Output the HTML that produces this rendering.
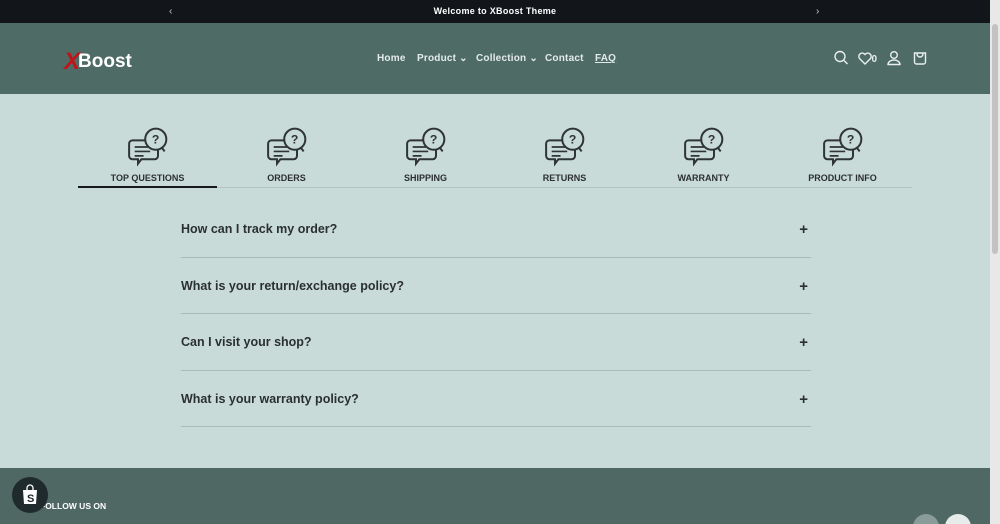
<!DOCTYPE html>
<html><head><meta charset="utf-8"><style>
*{margin:0;padding:0;box-sizing:border-box}
html,body{width:1000px;height:524px;overflow:hidden}
body{background:#c9dbd8;font-family:"Liberation Sans",sans-serif;position:relative}
.top{position:absolute;left:0;top:0;width:990px;height:23px;background:#12161b;color:#fff;font-size:9px;font-weight:bold;text-align:center;line-height:23px;letter-spacing:.3px}
.top .a{position:absolute;top:0;font-size:10px;font-weight:normal;color:#ccc}
.hdr{position:absolute;left:0;top:23px;width:990px;height:71px;background:#4f6b66}
.logo{position:absolute;left:64px;top:23px;color:#fff;font-weight:bold;font-size:19px}
.logo .x{color:#c0141b;font-size:24px;font-style:italic;margin-right:-2px;position:relative;top:2px}
.nav{position:absolute;top:30px;font-size:10px;font-weight:bold;color:#e3ebe9;letter-spacing:.2px}
.sb{position:absolute;right:0;top:0;width:10px;height:524px;background:#e8e8e8}
.sb div{position:absolute;left:2px;top:24px;width:6px;height:230px;background:#c2c2c2;border-radius:3px}
.tab{position:absolute;top:127px;width:139px;text-align:center;font-size:9px;font-weight:bold;color:#2b2f31}
.tab svg{display:block;margin:0 auto 6px}
.line{position:absolute;left:78px;top:187px;width:834px;height:1px;background:#b5c3c3}
.act{position:absolute;left:78px;top:186px;width:139px;height:2px;background:#15191c}
.q{position:absolute;left:181px;width:630px;font-size:12.5px;font-weight:bold;color:#2a2f31}
.q span{position:absolute;right:3px;top:-1px;font-size:15px}
.sep{position:absolute;left:181px;width:630px;height:1px;background:#a9bbb8}
.ftr{position:absolute;left:0;top:468px;width:990px;height:56px;background:#4f6863;color:#fff;overflow:hidden}
</style></head><body>
<div class="top">Welcome to XBoost Theme<span class="a" style="left:169px">‹</span><span class="a" style="left:816px">›</span></div>
<div class="hdr">
<div class="logo"><span class="x">X</span>Boost</div>
<span class="nav" style="left:377px">Home</span>
<span class="nav" style="left:417px">Product ⌄</span>
<span class="nav" style="left:476px">Collection ⌄</span>
<span class="nav" style="left:545px">Contact</span>
<span class="nav" style="left:595px;text-decoration:underline">FAQ</span>
<svg style="position:absolute;left:834px;top:27px" width="100" height="17" fill="none" stroke="#e8efed" stroke-width="1.4">
<circle cx="6" cy="6.5" r="5"/><path d="M10 10.5l3.5 3.5"/>
<path d="M31 14l-5.5-5.5a3.2 3.2 0 0 1 5.5-4a3.2 3.2 0 0 1 5.5 4z"/>
<text x="37.5" y="12" fill="#e8efed" stroke="none" font-size="10" font-family="Liberation Sans" font-weight="bold">0</text>
<circle cx="60" cy="5" r="3.3"/><path d="M54 14.5h12a6 4.5 0 0 0-12 0z"/>
<path d="M80.5 3h11v9a2 2 0 0 1-2 2h-7a2 2 0 0 1-2-2z M83 3v1a3 3 0 0 0 6 0v-1"/>
</svg>
</div>
<svg width="0" height="0" style="position:absolute"><defs><g id="ic" fill="none" stroke="#2f3436" stroke-width="1.8"><path d="M4 12h20a3 3 0 0 1 3 3v11a3 3 0 0 1-3 3H12l-3 4v-4H4a3 3 0 0 1-3-3V15a3 3 0 0 1 3-3z" fill="#c9dbd8"/><path d="M6 18h12M6 22h14M6 26h8" stroke-width="1.5"/><circle cx="25" cy="11" r="9.5" fill="#c9dbd8"/><path d="M30 18l3 4"/><text x="21.5" y="15" font-size="11" font-weight="bold" fill="#2f3436" stroke="none" font-family="Liberation Sans">?</text></g></defs></svg>
<div class="tab" style="left:78px"><svg width="40" height="40" viewBox="0 0 36 36"><use href="#ic"/></svg>TOP QUESTIONS</div>
<div class="tab" style="left:217px"><svg width="40" height="40" viewBox="0 0 36 36"><use href="#ic"/></svg>ORDERS</div>
<div class="tab" style="left:356px"><svg width="40" height="40" viewBox="0 0 36 36"><use href="#ic"/></svg>SHIPPING</div>
<div class="tab" style="left:495px"><svg width="40" height="40" viewBox="0 0 36 36"><use href="#ic"/></svg>RETURNS</div>
<div class="tab" style="left:634px"><svg width="40" height="40" viewBox="0 0 36 36"><use href="#ic"/></svg>WARRANTY</div>
<div class="tab" style="left:773px"><svg width="40" height="40" viewBox="0 0 36 36"><use href="#ic"/></svg>PRODUCT INFO</div>
<div class="line"></div><div class="act"></div>
<div class="q" style="top:222px">How can I track my order?<span>+</span></div>
<div class="sep" style="top:257px"></div>
<div class="q" style="top:279px">What is your return/exchange policy?<span>+</span></div>
<div class="sep" style="top:313px"></div>
<div class="q" style="top:335px">Can I visit your shop?<span>+</span></div>
<div class="sep" style="top:370px"></div>
<div class="q" style="top:392px">What is your warranty policy?<span>+</span></div>
<div class="sep" style="top:426px"></div>
<div class="ftr">
<div style="position:absolute;left:40px;top:33px;font-size:8.5px;font-weight:bold">FOLLOW US ON</div>
<div style="position:absolute;left:913px;top:46px;width:26px;height:26px;border-radius:50%;background:#8a9c99"></div>
<div style="position:absolute;left:945px;top:46px;width:26px;height:26px;border-radius:50%;background:#e6ecea"></div>
</div>
<div style="position:absolute;left:12px;top:477px;width:36px;height:36px;border-radius:50%;background:#1f2a2c"></div>
<svg style="position:absolute;left:21px;top:484px" width="18" height="22"><path d="M2 6h14l-1 14H3z" fill="#fff"/><path d="M6 6V4a3 3 0 0 1 6 0v2" fill="none" stroke="#fff" stroke-width="1.3"/><text x="6" y="18" font-size="11" font-weight="bold" fill="#1f2a2c" font-family="Liberation Sans">S</text></svg>
<div class="sb"><div></div></div>
</body></html>
